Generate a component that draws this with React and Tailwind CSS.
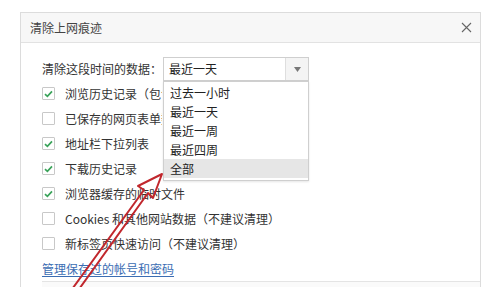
import React from "react";

const font = { fontFamily: '"Microsoft YaHei", "Noto Sans CJK SC", "Noto Sans", sans-serif' };

function Check({ checked }) {
  return (
    <span className="w-[13px] h-[13px] border border-[#c8c8c8] bg-white flex items-center justify-center shrink-0 rounded-[1px]">
      {checked && (
        <svg width="9" height="8" viewBox="0 0 9 8">
          <path d="M1 4.2 L3.4 6.4 L8 1.4" fill="none" stroke="#3aa35a" strokeWidth="1.7" />
        </svg>
      )}
    </span>
  );
}

const rows = [
  [true, "浏览历史记录（包含"],
  [false, "已保存的网页表单数据"],
  [true, "地址栏下拉列表"],
  [true, "下载历史记录"],
  [true, "浏览器缓存的临时文件"],
  [false, "Cookies 和其他网站数据（不建议清理）"],
  [false, "新标签页快速访问（不建议清理）"],
];

const options = ["过去一小时", "最近一天", "最近一周", "最近四周", "全部"];

export default function App() {
  return (
    <div className="relative w-[500px] h-[287px] bg-white overflow-hidden pt-[12px] pl-[20px] text-[12px] text-[#333]" style={font}>
      <div className="w-[461px] h-[290px] border border-[#dcdcdc] flex flex-col">
        <div className="h-[30px] shrink-0 bg-[#f7f7f7] border-b border-[#e2e2e2] flex items-center justify-between pl-[9px] pr-[8px]">
          <span className="text-[12px] text-[#444]">清除上网痕迹</span>
          <svg width="11" height="11" viewBox="0 0 11 11">
            <path d="M1 1 L10 10 M10 1 L1 10" stroke="#666" strokeWidth="1.1" />
          </svg>
        </div>
        <div className="relative pl-[21px] pt-[14px] flex flex-col">
          <div className="h-[24px] flex items-center">
            <span className="w-[121px]">清除这段时间的数据：</span>
            <div className="w-[146px] h-[24px] border border-[#cfcfcf] flex items-center bg-white">
              <span className="flex-1 pl-[5px] text-[#222]">最近一天</span>
              <span className="w-[23px] h-full bg-[#f4f4f4] border-l border-[#dedede] flex items-center justify-center">
                <svg width="7" height="5" viewBox="0 0 7 5">
                  <path d="M0 0 L7 0 L3.5 5 Z" fill="#777" />
                </svg>
              </span>
            </div>
          </div>
          {rows.map(([c, t], i) => (
            <div key={i} className="h-[25px] flex items-center gap-[10px]">
              <Check checked={c} />
              <span className={`whitespace-nowrap ${i < 2 ? "max-w-[97px] overflow-hidden" : ""}`}>{t}</span>
            </div>
          ))}
          <div className="h-[25px] flex items-center">
            <span className="text-[#3b6db3] underline underline-offset-2">管理保存过的帐号和密码</span>
          </div>
          <div className="border-t border-[#e4e4e4] h-[10px] bg-[#fafafa]" />

          <div className="absolute left-[142px] top-[38px] w-[146px] border border-[#cfcfcf] bg-white pt-[1px] pb-[2px] shadow-[0_1px_2px_rgba(0,0,0,0.1)]">
            {options.map((o, i) => (
              <div key={o} className={`h-[19px] flex items-center pl-[6px] ${i === 4 ? "bg-[#e6e6e6]" : ""} text-[#222]`}>
                {o}
              </div>
            ))}
          </div>
        </div>
      </div>

      <svg className="absolute left-0 top-0 pointer-events-none" width="500" height="287" viewBox="0 0 500 287">
        <path
          d="M70 292 L144 190 L138 186 L162 174 L153 198 L148 193 L77 292"
          stroke="#c1272d"
          strokeWidth="2"
          fill="none"
          strokeLinejoin="round"
        />
      </svg>
    </div>
  );
}
